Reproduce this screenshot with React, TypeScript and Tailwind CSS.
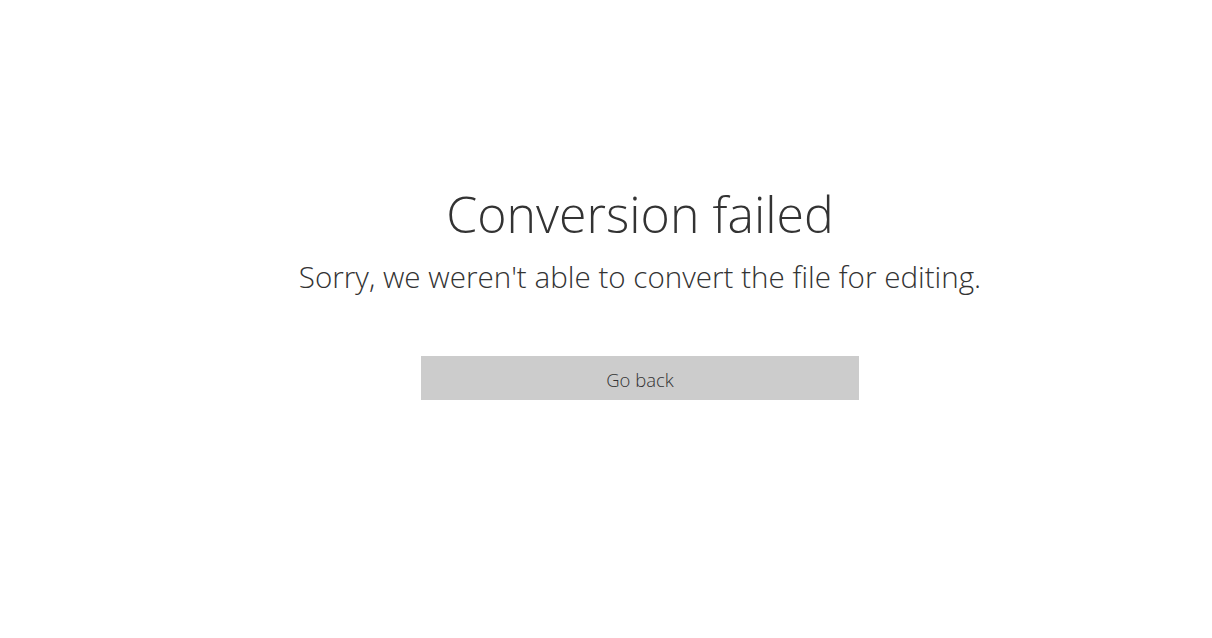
export default function App() {
  return (
    <div className="w-[1212px] h-[638px] bg-white overflow-hidden">
      <div className="w-[1280px] h-[638px] flex flex-col items-center text-[#333333]" style={{ fontFamily: '"Open Sans", "Segoe UI", sans-serif' }}>
        <h1 className="mt-[178px] text-[50px] leading-[72px] font-light">Conversion failed</h1>
        <p className="mt-[5px] text-[29.6px] leading-[44px] font-light">Sorry, we weren't able to convert the file for editing.</p>
        <button className="mt-[57px] w-[438px] h-[44px] pt-[3px] bg-[#cccccc] text-[18.5px] font-light text-[#333333]">Go back</button>
      </div>
    </div>
  );
}
